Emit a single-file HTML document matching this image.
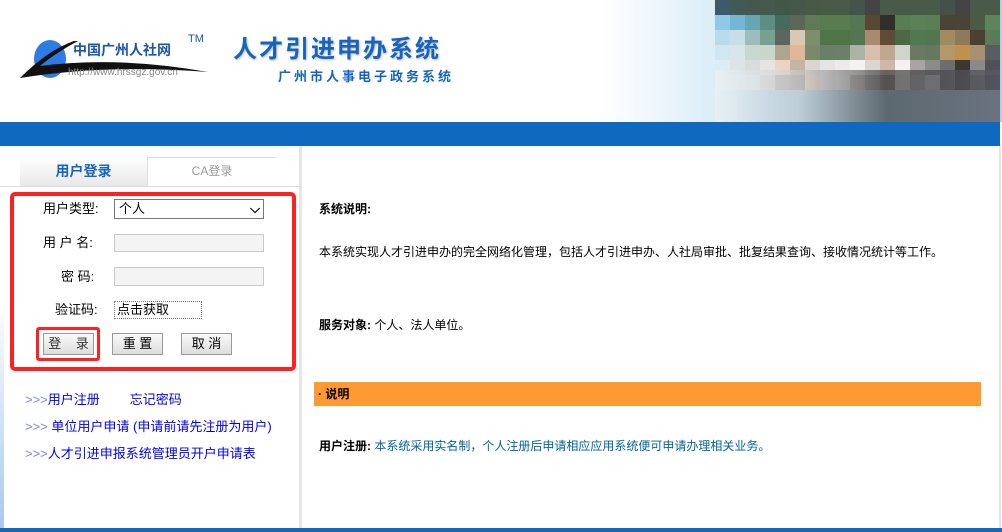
<!DOCTYPE html>
<html><head><meta charset="utf-8"><style>
*{margin:0;padding:0;box-sizing:border-box}
body{width:1002px;height:532px;overflow:hidden;background:#fff;font-family:"Liberation Sans","Noto Sans CJK SC",sans-serif;font-size:12px;color:#000;position:relative}
.a{position:absolute;white-space:nowrap}
.hdr{position:absolute;left:0;top:0;width:1002px;height:122px;background:linear-gradient(90deg,#fff 0%,#fff 60%,#d9ecf6 72%,#a9d3ea 76%)}
.bar{position:absolute;left:0;top:122px;width:1000px;height:24px;background:#0f6abf}
.pix{position:absolute;left:715px;top:0;width:285px;height:122px;display:grid;grid-template-columns:repeat(19,15px);grid-template-rows:repeat(6,15px)}
.box{position:absolute;border:1px solid #c8c8c8;background:#f4f4f4}
.btn{position:absolute;height:22px;border:1px solid #999;background:linear-gradient(#fafafa,#ddd);font-size:13px;text-align:center;line-height:20px;white-space:nowrap}
.lnk{color:#0000ee;font-size:13px}
.lnk b{color:#8080ff;font-weight:normal}
.lb{font-size:13px;line-height:16px}
</style></head><body>
<div class="hdr"></div>
<div class="pix" id="px"></div>
<div class="a" style="left:715px;top:70px;width:285px;height:52px;background:linear-gradient(90deg,rgba(230,240,245,.9),rgba(200,200,200,.6) 30%,rgba(60,60,60,.7) 60%,rgba(90,90,100,.8))"></div>
<svg class="a" style="left:18px;top:36px" width="200" height="48"><ellipse cx="32" cy="23" rx="16" ry="19" fill="#2e7be3"/><path d="M2 42 Q30 14 56 5 L60 5 Q36 18 22 30 Q100 20 190 36 Q90 28 2 42Z" fill="#111"/></svg>
<div class="a" style="left:73px;top:42px;font-size:14px;font-weight:bold;color:#1a56b0;line-height:16px">中国广州人社网</div>
<div class="a" style="left:188px;top:33px;font-size:11px;color:#1a56b0">TM</div>
<div class="a" style="left:68px;top:67px;font-size:10px;color:#888;line-height:12px">http://www.hrssgz.gov.cn</div>
<div class="a" style="left:233px;top:35px;font-size:24px;font-weight:bold;color:#1565c0;letter-spacing:2px;text-shadow:1px 1px 2px #bbb;line-height:30px">人才引进申办系统</div>
<div class="a" style="left:278px;top:69px;font-size:13px;font-weight:bold;color:#1565c0;letter-spacing:3px;line-height:16px">广州市人事电子政务系统</div>
<div class="bar"></div>
<div class="a" style="left:0;top:300px;width:4px;height:228px;background:linear-gradient(#fff,#a8c8ec)"></div>
<div class="a" style="left:299px;top:146px;width:3px;height:382px;background:#e6e6e6"></div>
<div class="a" style="left:999px;top:146px;width:2px;height:382px;background:#e6e6e6"></div>
<div class="a" style="left:0;top:528px;width:1002px;height:4px;background:#0f6abf"></div>
<div class="a" style="left:20px;top:157px;width:256px;height:1px;background:#ddd"></div>
<div class="a" style="left:20px;top:157px;width:128px;height:29px;background:linear-gradient(#fff,#e8e8e8);border-right:1px solid #ddd;text-align:center;line-height:29px;font-size:14px;font-weight:bold;color:#1565c0">用户登录</div>
<div class="a" style="left:148px;top:157px;width:128px;height:29px;text-align:center;line-height:29px;font-size:12px;color:#999">CA登录</div>
<div class="a" style="left:0;top:186px;width:300px;height:1px;background:#ddd"></div>
<div class="a" style="left:10px;top:192px;width:286px;height:179px;border:4px solid #ff2020;border-radius:5px"></div>
<div class="a lb" style="left:43px;top:201px">用户类型:</div>
<div class="a" style="left:114px;top:199px;width:150px;height:20px;border:1px solid #777;background:#fff;font-size:13px;padding-left:4px;line-height:18px">个人<span style="position:absolute;right:3px;top:0;font-weight:bold">⌵</span></div>
<div class="a lb" style="left:43px;top:235px">用 户 名:</div>
<div class="box" style="left:114px;top:234px;width:150px;height:18px"></div>
<div class="a lb" style="left:61px;top:269px">密 码:</div>
<div class="box" style="left:114px;top:267px;width:150px;height:19px"></div>
<div class="a lb" style="left:55px;top:302px">验证码:</div>
<div class="a" style="left:114px;top:301px;width:88px;height:18px;border:1px dotted #777;font-size:13px;padding-left:2px;line-height:16px">点击获取</div>
<div class="a" style="left:36px;top:327px;width:64px;height:34px;border:3px solid #ff2020;border-radius:3px"></div>
<div class="btn" style="left:43px;top:333px;width:51px;color:#333">登&nbsp;&nbsp;&nbsp;&nbsp;录</div>
<div class="btn" style="left:112px;top:333px;width:51px">重&nbsp;置</div>
<div class="btn" style="left:181px;top:333px;width:51px">取&nbsp;消</div>
<div class="a lnk" style="left:25px;top:389px"><b>&gt;&gt;&gt;</b>用户注册<span style="margin-left:30px">忘记密码</span></div>
<div class="a lnk" style="left:25px;top:416px"><b>&gt;&gt;&gt;</b> 单位用户申请 (申请前请先注册为用户)</div>
<div class="a lnk" style="left:25px;top:443px"><b>&gt;&gt;&gt;</b>人才引进申报系统管理员开户申请表</div>
<div class="a" style="left:319px;top:200px;font-weight:bold">系统说明:</div>
<div class="a" style="left:319px;top:243px">本系统实现人才引进申办的完全网络化管理，包括人才引进申办、人社局审批、批复结果查询、接收情况统计等工作。</div>
<div class="a" style="left:319px;top:316px"><b>服务对象:</b> 个人、法人单位。</div>
<div class="a" style="left:314px;top:382px;width:667px;height:24px;background:#ff9933;font-weight:bold;line-height:24px;padding-left:4px">· 说明</div>
<div class="a" style="left:319px;top:437px"><b>用户注册:</b> <span style="color:#00649c">本系统采用实名制，个人注册后申请相应应用系统便可申请办理相关业务。</span></div>
<script>
var c=["#3e5a6a","#405a55","#44584e","#445a4c","#415848","#435848","#475a48","#4a5a48","#4a5a48","#44544a","#444","#4a5a48","#4a5a48","#4a5a48","#4a5a48","#44504a","#444","#4a5a48","#4a5a48",
"#90c8e8","#78b4d4","#66a6b0","#5a8f82","#476a5e","#5e6656","#5e7a58","#587c50","#587c50","#547650","#574834","#303028","#587c54","#5c8058","#5a7e56","#4a4436","#484436","#4a5a44","#5e845c",
"#b8dcee","#c8dde4","#9ebcbc","#77a08e","#5c6660","#d8c8b4","#7e8e6c","#4e7548","#4e7548","#517650","#a88a70","#604c36","#4d6844","#527850","#527650","#a08a62","#8e7a5a","#4a4030","#5c7a58",
"#d0e6f2","#d6e6ea","#c8d8d0","#c8d6cc","#b0a48e","#e0b898","#7c886c","#6a8064","#6c8068","#aab4a4","#d8c0ac","#c0a890","#d2d4cc","#6a7a62","#66785e","#b4986a","#c09050","#a89070","#5a5c64",
"#dcecf4","#dce4e8","#d8dcdc","#e4e4e2","#e8d4c0","#c4b4a4","#ddd6d0","#e6e4e2","#ecebea","#f4f2f0","#dcd6d2","#d0b8a8","#f4f2f0","#a8a4a4","#8c8c8a","#6e6e6c","#3a3830","#8a8a8a","#505056",
"#e6f0f6","#e8eef2","#e4e8ea","#d8d0cc","#b0a8a4","#a8a0a0","#ecd8c8","#e8e4e2","#f0eeee","#c8c0ba","#a8a4a8","#8c847e","#ececea","#b8b0aa","#d8d6d4","#6c6c6c","#383838","#6c6c70","#3e3e44"];
var p=document.getElementById('px');c.forEach(function(x){var d=document.createElement('div');d.style.background=x;p.appendChild(d)});
</script>
</body></html>
